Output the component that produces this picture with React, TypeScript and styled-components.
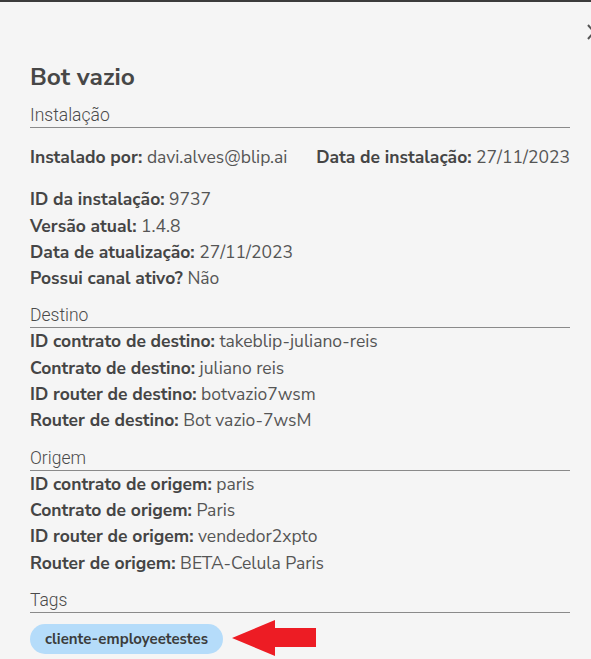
import React from "react";
import styled, { createGlobalStyle } from "styled-components";

const GlobalStyle = createGlobalStyle`
  html, body {
    margin: 0;
    padding: 0;
    background: #f5f5f5;
    overflow: hidden;
  }
  body {
    font-family: "Nunito Sans", Lato, "Liberation Sans", sans-serif;
  }
`;

const Panel = styled.div`
  position: relative;
  width: 591px;
  height: 659px;
  box-sizing: border-box;
  border-top: 2px solid #3c3c3c;
  padding: 0 21px 0 30px;
  background: #f5f5f5;
  overflow: hidden;
`;

const CloseButton = styled.button`
  position: absolute;
  top: 21px;
  left: 584px;
  width: 20px;
  height: 20px;
  padding: 0;
  border: none;
  background: transparent;
  color: #555;
  cursor: pointer;
`;

const Title = styled.h2`
  margin: 60px 0 0 0;
  font-size: 24.5px;
  line-height: 30px;
  font-weight: 700;
  color: #474747;
`;

const SectionHeader = styled.div<{ $first?: boolean }>`
  margin-top: ${({ $first }) => ($first ? "11px" : "12px")};
  font-family: Roboto, "Liberation Sans", sans-serif;
  font-size: 17.5px;
  font-weight: 300;
  line-height: 24px;
  color: #4a4a4a;
  border-bottom: 1px solid #8a8a8a;
`;

const InstallRow = styled.div`
  display: flex;
  justify-content: space-between;
  margin: 16px 0;
`;

const Field = styled.div`
  font-size: 17.5px;
  line-height: 26.3px;
  color: #555;
  white-space: nowrap;
`;

const Label = styled.span`
  font-weight: 700;
  color: #454545;
`;

const TagList = styled.div`
  display: flex;
  align-items: center;
  gap: 9px;
  height: 38px;
  margin-top: 7px;
`;

const Tag = styled.span`
  display: inline-flex;
  align-items: center;
  height: 30px;
  padding: 0 15px;
  border-radius: 15px;
  background: #b5dcfa;
  color: #3c3c3c;
  font-size: 15px;
  font-weight: 700;
`;

const Pointer = styled.svg`
  display: block;
`;

const destino = [
  ["ID contrato de destino:", "takeblip-juliano-reis"],
  ["Contrato de destino:", "juliano reis"],
  ["ID router de destino:", "botvazio7wsm"],
  ["Router de destino:", "Bot vazio-7wsM"],
];

const origem = [
  ["ID contrato de origem:", "paris"],
  ["Contrato de origem:", "Paris"],
  ["ID router de origem:", "vendedor2xpto"],
  ["Router de origem:", "BETA-Celula Paris"],
];

const instalacao = [
  ["ID da instalação:", "9737"],
  ["Versão atual:", "1.4.8"],
  ["Data de atualização:", "27/11/2023"],
  ["Possui canal ativo?", "Não"],
];

function Fields({ rows }: { rows: string[][] }) {
  return (
    <>
      {rows.map(([label, value]) => (
        <Field key={label}>
          <Label>{label}</Label> {value}
        </Field>
      ))}
    </>
  );
}

export default function App() {
  return (
    <>
      <GlobalStyle />
      <Panel>
        <CloseButton aria-label="Fechar">
          <svg width="16" height="18" viewBox="0 0 16 18">
            <path
              d="M2 2 L14 16 M14 2 L2 16"
              stroke="currentColor"
              strokeWidth="2"
              fill="none"
            />
          </svg>
        </CloseButton>
        <Title>Bot vazio</Title>

        <SectionHeader $first>Instalação</SectionHeader>
        <InstallRow>
          <Field>
            <Label>Instalado por:</Label> davi.alves@blip.ai
          </Field>
          <Field>
            <Label>Data de instalação:</Label> 27/11/2023
          </Field>
        </InstallRow>
        <Fields rows={instalacao} />

        <SectionHeader>Destino</SectionHeader>
        <Fields rows={destino} />

        <SectionHeader>Origem</SectionHeader>
        <Fields rows={origem} />

        <SectionHeader>Tags</SectionHeader>
        <TagList>
          <Tag>cliente-employeetestes</Tag>
          <Pointer width="86" height="38" viewBox="0 0 86 38">
            <path
              d="M0 18 L43 0 L43 8 L84 8 L84 27 L43 27 L43 36 Z"
              fill="#ed1c24"
            />
          </Pointer>
        </TagList>
      </Panel>
    </>
  );
}
